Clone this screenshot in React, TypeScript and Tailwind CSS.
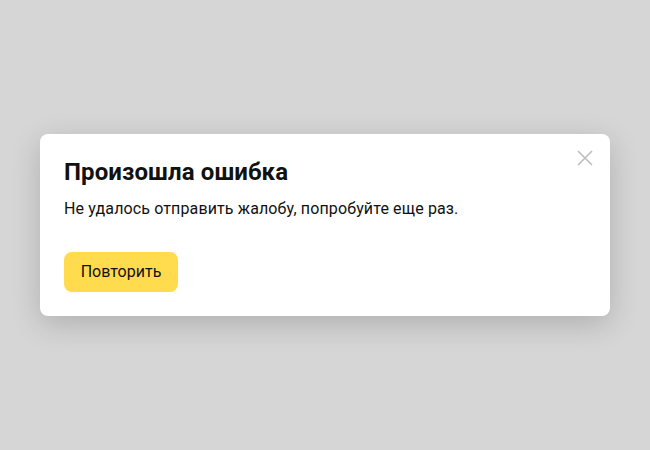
function App() {
  return (
    <div
      className="flex h-[450px] w-[650px] items-center justify-center bg-[#d6d6d6]"
      style={{ fontFamily: "Roboto, 'Liberation Sans', sans-serif" }}
    >
      <div className="relative w-[570px] rounded-lg bg-white px-6 pb-6 pt-6 shadow-[0_8px_30px_rgba(0,0,0,0.18)]">
        <button
          type="button"
          aria-label="Закрыть"
          className="absolute right-[16px] top-[15px] flex h-[18px] w-[18px] items-center justify-center text-[#bdbdbd]"
        >
          <svg width="16" height="16" viewBox="0 0 16 16" fill="none">
            <path d="M1 1L15 15M15 1L1 15" stroke="currentColor" strokeWidth="1.6" />
          </svg>
        </button>
        <h2 className="text-[24px] font-bold leading-[28px] tracking-[0.004em] text-[#111]">
          Произошла ошибка
        </h2>
        <p className="mt-[12px] text-[16px] leading-[22px] tracking-[0.008em] text-[#111]">
          Не удалось отправить жалобу, попробуйте еще раз.
        </p>
        <button
          type="button"
          className="mt-[32px] h-[40px] w-[114px] rounded-lg bg-[#ffdb4d] text-[16px] text-[#111]"
        >
          Повторить
        </button>
      </div>
    </div>
  );
}

export default App;
